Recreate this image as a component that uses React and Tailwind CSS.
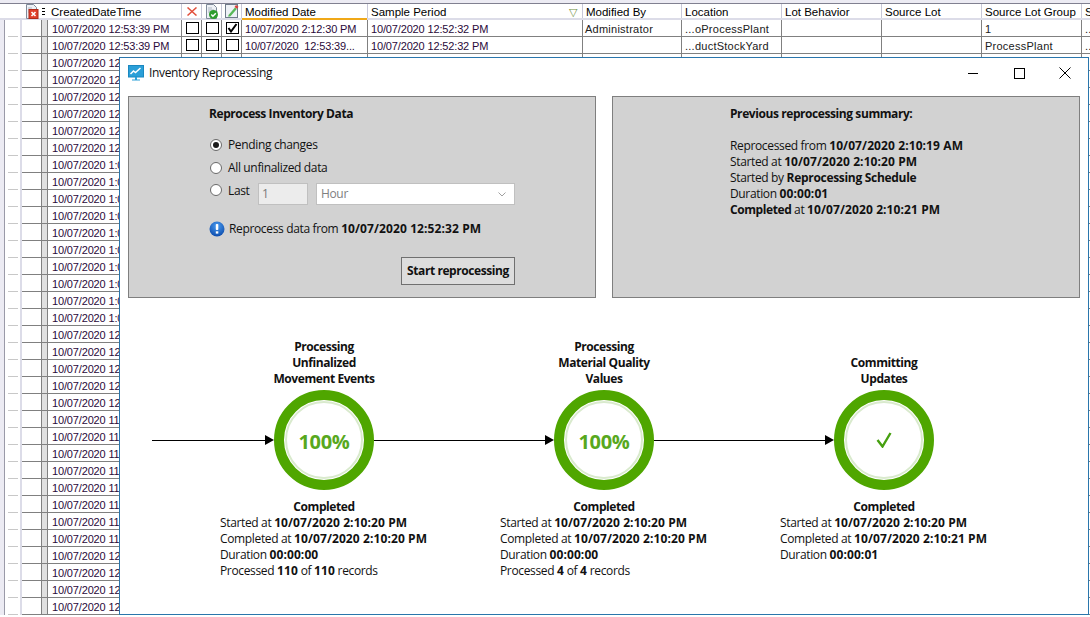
const rowTimes = [
  '12', '12', '12', '12', '12', '12',
  '1:0', '1:0', '1:0', '1:0', '1:0', '1:0', '1:0', '1:0', '1:0', '1:0',
  '12', '12', '12', '12', '12',
  '11', '11', '11', '11', '11', '11', '11', '11',
  '12', '12', '12', '12',
];

const columns = [
  { label: 'Modified Date', width: 'w-[126px]', active: true },
  { label: 'Sample Period', width: 'w-[215px]', filter: true },
  { label: 'Modified By', width: 'w-[99px]' },
  { label: 'Location', width: 'w-[100px]' },
  { label: 'Lot Behavior', width: 'w-[100px]' },
  { label: 'Source Lot', width: 'w-[100px]' },
  { label: 'Source Lot Group', width: 'w-[100px]' },
  { label: 'S', width: 'w-[9px]' },
];

const firstRows = [
  { flagged: true, modified: '10/07/2020 2:12:30 PM', by: 'Administrator', location: '...oProcessPlant', group: '1' },
  { flagged: false, modified: '10/07/2020  12:53:39...', by: '', location: '...ductStockYard', group: 'ProcessPlant' },
];

const steps = [
  {
    title: ['Processing', 'Unfinalized', 'Movement Events'],
    started: '10/07/2020 2:10:20 PM',
    completed: '10/07/2020 2:10:20 PM',
    duration: '00:00:00',
    processed: ['110', '110'],
  },
  {
    title: ['Processing', 'Material Quality', 'Values'],
    started: '10/07/2020 2:10:20 PM',
    completed: '10/07/2020 2:10:20 PM',
    duration: '00:00:00',
    processed: ['4', '4'],
  },
  {
    title: ['Committing', 'Updates'],
    started: '10/07/2020 2:10:20 PM',
    completed: '10/07/2020 2:10:21 PM',
    duration: '00:00:01',
  },
];

function CheckBox({ checked }) {
  return (
    <span className="ml-px flex h-[12px] w-[13px] items-center justify-center border border-black bg-white">
      {checked && (
        <svg width="11" height="10" viewBox="0 0 11 10">
          <path d="M1.500 5l2.500 3.500L9.500 1" fill="none" stroke="#000" strokeWidth="2" />
        </svg>
      )}
    </span>
  );
}

function DocIcon({ badge }) {
  return (
    <svg width="14" height="15" viewBox="0 0 14 15">
      <path d="M1.500 .5h7l3 3v11h-10z" fill="#eef1f6" stroke="#7f8a9a" />
      <path d="M3 4h4M3 6h6M3 8h3" stroke="#aeb6c2" />
      {badge === 'x' && (
        <>
          <rect x="4" y="5.500" width="9" height="9" fill="#e0402c" stroke="#b02a1a" />
          <path d="M6.500 8l4 4M10.500 8l-4 4" stroke="#fff" strokeWidth="1.600" />
        </>
      )}
      {badge === 'check' && (
        <>
          <circle cx="8.500" cy="10.500" r="4.500" fill="#2e9d2e" />
          <path d="M6.300 10.500l1.600 1.700 2.900-3" fill="none" stroke="#fff" strokeWidth="1.400" />
        </>
      )}
    </svg>
  );
}

function EditIcon() {
  return (
    <svg width="14" height="14" viewBox="0 0 14 14">
      <rect x=".5" y=".5" width="12" height="13" fill="#eef1f6" stroke="#6f7a8a" />
      <path d="M3.500 11L10 3.500l1.800 1.500-6.300 7.300-2.200.5z" fill="#58b858" />
      <path d="M9.500 3l1.500-2 2.500 1.800-1.500 2z" fill="#d9413a" />
    </svg>
  );
}

function GridHeader() {
  return (
    <div className="flex h-[16px] border-b-2 border-[#dcdce8] bg-white pl-[5px] text-[11.5px] text-black">
      <div className="flex w-[42px] shrink-0 items-center pl-[20px]">
        <DocIcon badge="x" />
        <span className="ml-[3px] flex h-[7px] w-[3px] flex-col justify-between">
          <span className="h-px bg-black" />
          <span className="h-px bg-black" />
          <span className="h-px bg-black" />
        </span>
      </div>
      <div className="flex w-[134px] shrink-0 items-center pl-[4px] pt-[4px]">CreatedDateTime</div>
      <div className="flex w-[20px] shrink-0 items-center justify-center border-l border-[#c8c8d8]">
        <svg width="10" height="9" viewBox="0 0 10 9"><path d="M.5 .5l9 8M9.500 .5l-9 8" stroke="#e2503c" strokeWidth="1.500" /></svg>
      </div>
      <div className="flex w-[20px] shrink-0 items-center justify-center border-l border-[#c8c8d8]">
        <DocIcon badge="check" />
      </div>
      <div className="flex w-[20px] shrink-0 items-center justify-center border-l border-[#c8c8d8]">
        <EditIcon />
      </div>
      {columns.map((col) => (
        <div key={col.label} className={`relative flex shrink-0 items-center whitespace-nowrap border-l border-[#c8c8d8] pl-[3px] pt-[4px] ${col.width}`}>
          {col.label}
          {col.filter && <span className="absolute right-[5px] top-0 text-[11px] text-[#6f8f3f]">▽</span>}
          {col.active && <span className="absolute inset-x-0 -bottom-[2px] h-[2px] bg-[#f0a818]" />}
        </div>
      ))}
    </div>
  );
}

function RowCell({ width, pad, text, date }) {
  return (
    <div className={`shrink-0 whitespace-pre border-l border-[#808080] pt-[2px] ${width} ${pad || 'pl-[3px]'} ${date ? 'tracking-[-0.15px] text-[#2a0a3a]' : 'tracking-[0.25px] text-[#202020]'}`}>
      {text}
    </div>
  );
}

function GridRow({ time, data }) {
  return (
    <div className="flex h-[17px] text-[11px] leading-[14px]">
      <div className="w-[5px] shrink-0 border-r border-[#9a9aa8] bg-[#ecebf3]" />
      <div className="flex w-[15px] shrink-0 items-end justify-center bg-white">
        <span className="h-px w-[10px] bg-[#c8c8c8]" />
      </div>
      <div className="w-[2px] shrink-0 bg-[#dcdce8]" />
      <div className="flex flex-1 overflow-hidden border-b border-[#808080]">
        <div className="w-[19px] shrink-0 bg-white" />
        <div className="w-[6px] shrink-0 border-l border-[#808080] bg-[#e0e0e0]" />
        <RowCell width="w-[134px]" pad="pl-[4px]" date text={data ? `10/07/2020 ${time}:53:39 PM` : `10/07/2020 ${time}`} />
        <div className="flex w-[20px] shrink-0 items-center justify-center border-l border-[#808080]">{data && <CheckBox />}</div>
        <div className="flex w-[20px] shrink-0 items-center justify-center border-l border-[#808080]">{data && <CheckBox />}</div>
        <div className="flex w-[20px] shrink-0 items-center justify-center border-l border-[#808080]">{data && <CheckBox checked={data.flagged} />}</div>
        <RowCell width="w-[126px]" date text={data?.modified} />
        <RowCell width="w-[215px]" date text={data && '10/07/2020 12:52:32 PM'} />
        <RowCell width="w-[99px]" pad="pl-[2px]" text={data?.by} />
        <RowCell width="w-[100px]" text={data?.location} />
        <RowCell width="w-[100px]" />
        <RowCell width="w-[100px]" />
        <RowCell width="w-[100px]" text={data?.group} />
        <RowCell width="w-[9px]" text={data && '..'} />
      </div>
    </div>
  );
}

function Radio({ checked }) {
  return (
    <span className="ml-px flex h-[12px] w-[12px] shrink-0 items-center justify-center rounded-full border border-[#6a6a6a] bg-white">
      {checked && <span className="h-[6px] w-[6px] rounded-full bg-[#1a1a1a]" />}
    </span>
  );
}

function InfoIcon() {
  return (
    <svg width="16" height="16" viewBox="0 0 16 16" className="shrink-0">
      <defs>
        <radialGradient id="infoFill" cx="50%" cy="30%" r="75%">
          <stop offset="0%" stopColor="#4a9cf0" />
          <stop offset="100%" stopColor="#0846a8" />
        </radialGradient>
      </defs>
      <circle cx="8" cy="8" r="7.500" fill="url(#infoFill)" />
      <rect x="6.800" y="3" width="2.500" height="6" rx=".8" fill="#fff" />
      <rect x="6.800" y="10.300" width="2.500" height="2.300" fill="#fff" />
    </svg>
  );
}

function WindowIcon() {
  return (
    <svg width="16" height="16" viewBox="0 0 16 16">
      <rect x=".5" y=".5" width="15" height="11.500" fill="#2b9fd8" stroke="#1b88c0" />
      <path d="M2.500 9l3-3 2 1.500 5-4.500" fill="none" stroke="#fff" strokeWidth="1.500" />
      <path d="M7 12h2v2.500H7zM4 14.500h8v1H4z" fill="#2b9fd8" />
    </svg>
  );
}

function Arrow({ width }) {
  return (
    <div className={`flex shrink-0 items-center ${width}`}>
      <div className="h-px flex-1 bg-black" />
      <svg width="9" height="10" viewBox="0 0 9 10">
        <path d="M0 0l9 5-9 5z" fill="#000" />
      </svg>
    </div>
  );
}

function StepCircle({ done }) {
  return (
    <div className="h-[100px] w-[100px] shrink-0 rounded-full border-[10px] border-[#4fa600] bg-white p-px">
      <div className="flex h-full w-full items-center justify-center rounded-full border-2 border-[#d9eacd]">
        {done ? (
          <svg width="16" height="16" viewBox="0 0 16 16">
            <path d="M1.500 8l5 6.500L14.500 1" fill="none" stroke="#46a010" strokeWidth="2.400" />
          </svg>
        ) : (
          <span className="pt-[3px] text-[20px] font-bold text-[#58a81e]">100%</span>
        )}
      </div>
    </div>
  );
}

function Bold({ children }) {
  return <b className="font-bold tracking-[0.1px]">{children}</b>;
}

function ReprocessPanel() {
  return (
    <div className="h-[202px] w-[468px] shrink-0 border border-[#7f7f7f] bg-[#d2d2d2] pl-[80px] pt-[8px]">
      <div className="font-bold leading-[18px] tracking-[-0.42px]">Reprocess Inventory Data</div>
      <div className="mt-[14px] flex h-[16px] items-center gap-[6px]"><Radio checked /><span>Pending changes</span></div>
      <div className="mt-[7px] flex h-[16px] items-center gap-[6px]"><Radio /><span>All unfinalized data</span></div>
      <div className="mt-[7px] flex items-start">
        <span className="mt-[1px]"><Radio /></span>
        <span className="ml-[6px] w-[30px] leading-[16px]">Last</span>
        <div className="h-[22px] w-[50px] border border-[#c0c0c0] bg-[#ececec] pl-[3px] leading-[20px] text-[#7a7a7a]">1</div>
        <div className="ml-[8px] flex h-[22px] w-[199px] items-center justify-between border border-[#c0c0c0] bg-white pl-[4px] pr-[8px] text-[#808080]">
          <span>Hour</span>
          <svg width="8" height="5" viewBox="0 0 8 5"><path d="M.5 .5L4 4 7.500 .5" fill="none" stroke="#a0a0a0" /></svg>
        </div>
      </div>
      <div className="mt-[15px] flex items-center gap-[4px]">
        <InfoIcon />
        <span>Reprocess data from <Bold>10/07/2020 12:52:32 PM</Bold></span>
      </div>
      <div className="ml-[192px] mt-[19px] flex h-[28px] w-[114px] items-center justify-center border border-[#707070] bg-[#dddddd] font-bold tracking-[-0.42px]">Start reprocessing</div>
    </div>
  );
}

function SummaryPanel() {
  return (
    <div className="h-[202px] w-[468px] shrink-0 border border-[#7f7f7f] bg-[#d2d2d2] pl-[117px] pt-[8px] leading-[16px]">
      <div className="font-bold leading-[18px] tracking-[-0.42px]">Previous reprocessing summary:</div>
      <div className="mt-[15px]">Reprocessed from <Bold>10/07/2020 2:10:19 AM</Bold></div>
      <div>Started at <Bold>10/07/2020 2:10:20 PM</Bold></div>
      <div>Started by <b className="font-bold tracking-[-0.3px]">Reprocessing Schedule</b></div>
      <div>Duration <Bold>00:00:01</Bold></div>
      <div><b className="font-bold tracking-[-0.42px]">Completed</b> at <Bold>10/07/2020 2:10:21 PM</Bold></div>
    </div>
  );
}

function ReprocessWindow() {
  return (
    <div className="absolute left-[119px] top-[57px] h-[558px] w-[970px] border border-[#2a76ac] bg-white font-['Open_Sans',sans-serif] text-[12px] tracking-[-0.35px] text-[#111]">
      <div className="mb-[8px] flex h-[30px] items-center pl-[8px]">
        <WindowIcon />
        <span className="ml-[5px] text-[12px]">Inventory Reprocessing</span>
        <div className="ml-auto flex items-center">
          <span className="h-px w-[10px] bg-black" />
          <span className="ml-[36px] h-[11px] w-[11px] border border-black" />
          <svg className="ml-[34px] mr-[17px]" width="12" height="12" viewBox="0 0 12 12"><path d="M.5 .5l11 11M11.500 .5l-11 11" stroke="#000" /></svg>
        </div>
      </div>

      <div className="flex gap-[16px] pl-[8px]">
        <ReprocessPanel />
        <SummaryPanel />
      </div>

      <div className="mt-[41px] ml-[64px] grid grid-cols-[repeat(3,280px)] text-center font-bold leading-[16px] tracking-[-0.42px]">
        {steps.map((step) => (
          <div key={step.title[0] + step.title[1]} className="flex h-[48px] flex-col justify-end">
            {step.title.map((line) => <div key={line}>{line}</div>)}
          </div>
        ))}
      </div>

      <div className="ml-[32px] mt-[3px] flex items-center">
        <Arrow width="w-[122px]" />
        <StepCircle />
        <Arrow width="w-[180px]" />
        <StepCircle />
        <Arrow width="w-[180px]" />
        <StepCircle done />
      </div>

      <div className="ml-[64px] mt-[9px] grid grid-cols-[repeat(3,280px)] leading-[16px]">
        {steps.map((step) => (
          <div key={step.title[1]}>
            <div className="text-center font-bold tracking-[-0.42px]">Completed</div>
            <div className="pl-[36px]">
              <div>Started at <Bold>{step.started}</Bold></div>
              <div>Completed at <Bold>{step.completed}</Bold></div>
              <div>Duration <Bold>{step.duration}</Bold></div>
              {step.processed && (
                <div>Processed <Bold>{step.processed[0]}</Bold> of <Bold>{step.processed[1]}</Bold> records</div>
              )}
            </div>
          </div>
        ))}
      </div>
    </div>
  );
}

export default function App() {
  return (
    <div className="relative h-[617px] w-[1090px] overflow-hidden bg-white font-['Liberation_Sans',sans-serif]">
      <div className="h-[4px] border-b border-[#808090] bg-[#ecebf3]" />
      <GridHeader />
      <GridRow time="12" data={firstRows[0]} />
      <GridRow time="12" data={firstRows[1]} />
      {rowTimes.map((time, i) => <GridRow key={i} time={time} />)}
      <ReprocessWindow />
    </div>
  );
}
